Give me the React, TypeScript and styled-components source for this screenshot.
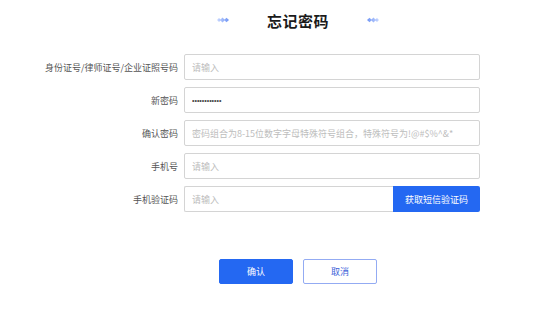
import React from "react";
import styled, { createGlobalStyle } from "styled-components";

const GlobalStyle = createGlobalStyle`
  html, body {
    margin: 0;
    padding: 0;
    background: #ffffff;
  }
  body {
    font-family: "Noto Sans CJK SC", "Noto Sans", Roboto, sans-serif;
    color: #333;
  }
  * {
    box-sizing: border-box;
  }
`;

const Page = styled.div`
  width: 554px;
  height: 314px;
  display: flex;
  flex-direction: column;
  overflow: hidden;
`;

const TitleBar = styled.div`
  height: 40px;
  display: flex;
  align-items: center;
  justify-content: center;
  padding-left: 42px;
  gap: 38px;
`;

const Title = styled.h1`
  margin: 0;
  font-size: 15px;
  font-weight: 700;
  color: #1a1a1a;
  letter-spacing: 0.5px;
  line-height: 1;
`;

const Form = styled.div`
  margin-top: 14px;
  padding-left: 38px;
  display: grid;
  grid-template-columns: 140px 296px;
  column-gap: 6px;
  row-gap: 7px;
`;

const Label = styled.label`
  height: 26px;
  display: flex;
  align-items: center;
  justify-content: flex-end;
  font-size: 9px;
  color: #555;
  white-space: nowrap;
`;

const Field = styled.div`
  display: flex;
  height: 26px;
`;

const Input = styled.input<{ $attached?: boolean; $secret?: boolean }>`
  flex: 1;
  min-width: 0;
  height: 26px;
  border: 1px solid #d4d4d4;
  border-radius: ${(p) => (p.$attached ? "2px 0 0 2px" : "2px")};
  border-right-width: ${(p) => (p.$attached ? "0" : "1px")};
  padding: 0 7px;
  font-family: ${(p) =>
    p.$secret ? '"Liberation Sans", Arial, sans-serif' : "inherit"};
  font-size: ${(p) => (p.$secret ? "7px" : "9px")};
  color: #444;
  outline: none;
  background: #fff;

  &::placeholder {
    color: #bdbdbd;
  }
`;

const CodeButton = styled.button`
  width: 87px;
  height: 26px;
  border: none;
  border-radius: 0 2px 2px 0;
  background: #2468f2;
  color: #fff;
  font-family: inherit;
  font-size: 9px;
  cursor: pointer;
`;

const Actions = styled.div`
  margin-top: 47px;
  display: flex;
  justify-content: center;
  padding-left: 42px;
  gap: 10px;
`;

const ActionButton = styled.button<{ $primary?: boolean }>`
  width: 74px;
  height: 25px;
  border-radius: 2px;
  border: 1px solid ${(p) => (p.$primary ? "#2468f2" : "#93abf3")};
  background: ${(p) => (p.$primary ? "#2468f2" : "#fff")};
  color: ${(p) => (p.$primary ? "#fff" : "#3d63d9")};
  font-family: inherit;
  font-size: 9px;
  cursor: pointer;
`;

function Deco({ flip }: { flip?: boolean }) {
  const id = flip ? "dg2" : "dg1";
  return (
    <svg
      width="12"
      height="6"
      viewBox="0 0 12 6"
      style={flip ? { transform: "scaleX(-1)" } : undefined}
    >
      <defs>
        <linearGradient id={id} x1="0" x2="1" y1="0" y2="0">
          <stop offset="0" stopColor="#c9d8ff" />
          <stop offset="1" stopColor="#6f95f5" />
        </linearGradient>
      </defs>
      <path
        d="M0 3 L2 1 L4 3 L2 5 Z M3 3 L5.5 0.5 L8 3 L5.5 5.5 Z M7 3 L9.5 0.8 L12 3 L9.5 5.2 Z"
        fill={`url(#${id})`}
      />
    </svg>
  );
}

const rows = [
  { label: "身份证号/律师证号/企业证照号码", placeholder: "请输入" },
  { label: "新密码", value: "••••••••••••" },
  {
    label: "确认密码",
    placeholder: "密码组合为8-15位数字字母特殊符号组合，特殊符号为!@#$%^&*",
  },
  { label: "手机号", placeholder: "请输入" },
];

export default function App() {
  return (
    <Page>
      <GlobalStyle />
      <TitleBar>
        <Deco />
        <Title>忘记密码</Title>
        <Deco flip />
      </TitleBar>
      <Form>
        {rows.map((r) => (
          <React.Fragment key={r.label}>
            <Label>{r.label}</Label>
            <Field>
              <Input
                $secret={!!r.value}
                placeholder={r.placeholder}
                defaultValue={r.value}
              />
            </Field>
          </React.Fragment>
        ))}
        <Label>手机验证码</Label>
        <Field>
          <Input $attached placeholder="请输入" />
          <CodeButton type="button">获取短信验证码</CodeButton>
        </Field>
      </Form>
      <Actions>
        <ActionButton $primary type="button">
          确认
        </ActionButton>
        <ActionButton type="button">取消</ActionButton>
      </Actions>
    </Page>
  );
}
